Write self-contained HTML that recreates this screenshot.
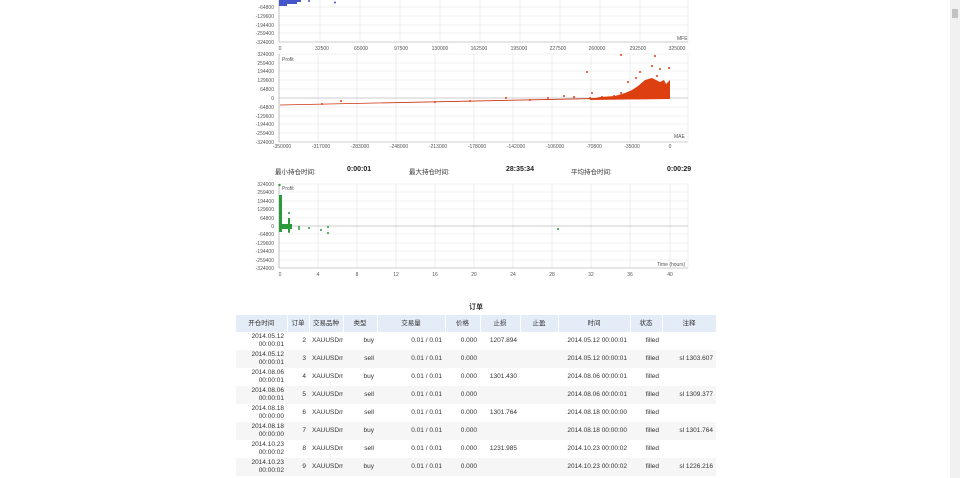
<!DOCTYPE html>
<html><head><meta charset="utf-8"><style>
body{margin:0;width:960px;height:478px;background:#fff;overflow:hidden;font-family:"Liberation Sans","Noto Sans CJK SC",sans-serif;position:relative}
.a{position:absolute}
svg text{font-family:"Liberation Sans",sans-serif;font-size:5px;fill:#555}
table{position:absolute;left:236px;top:315px;width:480px;table-layout:fixed;border-collapse:collapse;font-family:"Liberation Sans","Noto Sans CJK SC",sans-serif;font-size:6.5px;color:#333}
td,th{padding:0 3px;height:18px;line-height:8px;white-space:nowrap;overflow:hidden}
th{background:#e3ecf7;height:17px;font-weight:normal;border-right:1px solid #fff}
tr:nth-child(odd) td{background:#f6f6f6}
td.r{text-align:right}
.sb{position:absolute;left:950px;top:0;width:10px;height:478px;background:#f1f1f1}
.th{position:absolute;left:952px;top:9px;width:6px;height:9px;background:#c1c1c1}
</style></head><body>
<svg class="a" style="left:0;top:0" width="960" height="300">
<g stroke="#e2e2e2" stroke-width="0.6">
<line x1="279" y1="7" x2="688" y2="7"/><line x1="279" y1="16" x2="688" y2="16"/><line x1="279" y1="25" x2="688" y2="25"/><line x1="279" y1="33" x2="688" y2="33"/>
<line x1="320" y1="0" x2="320" y2="42"/><line x1="360" y1="0" x2="360" y2="42"/><line x1="400" y1="0" x2="400" y2="42"/><line x1="440" y1="0" x2="440" y2="42"/><line x1="480" y1="0" x2="480" y2="42"/><line x1="520" y1="0" x2="520" y2="42"/><line x1="560" y1="0" x2="560" y2="42"/><line x1="600" y1="0" x2="600" y2="42"/><line x1="640" y1="0" x2="640" y2="42"/><line x1="688" y1="0" x2="688" y2="42"/>
</g>
<line x1="279" y1="0" x2="279" y2="42" stroke="#999" stroke-width="0.6"/><line x1="279" y1="42" x2="688" y2="42" stroke="#999" stroke-width="0.6"/>
<path d="M279 0h22v2h-4v2h-10v2h-8z" fill="#4455cc"/><circle cx="309" cy="1" r="1" fill="#4455cc"/><circle cx="335" cy="2.5" r="1" fill="#4455cc"/>
<g text-anchor="end"><text x="274" y="9">-64800</text><text x="274" y="18">-129600</text><text x="274" y="27">-194400</text><text x="274" y="35">-259400</text><text x="274" y="44">-324000</text></g>
<text x="677" y="40">MFE</text>
<g text-anchor="middle"><text x="280" y="50">0</text><text x="322" y="50">32500</text><text x="361" y="50">65000</text><text x="401" y="50">97500</text><text x="440" y="50">130000</text><text x="479" y="50">162500</text><text x="519" y="50">195000</text><text x="558" y="50">227500</text><text x="597" y="50">260000</text><text x="638" y="50">292500</text><text x="677" y="50">325000</text></g>
<g stroke="#e2e2e2" stroke-width="0.6">
<line x1="279" y1="54" x2="688" y2="54"/><line x1="279" y1="63" x2="688" y2="63"/><line x1="279" y1="71" x2="688" y2="71"/><line x1="279" y1="80" x2="688" y2="80"/><line x1="279" y1="89" x2="688" y2="89"/><line x1="279" y1="107" x2="688" y2="107"/><line x1="279" y1="116" x2="688" y2="116"/><line x1="279" y1="124" x2="688" y2="124"/><line x1="279" y1="133" x2="688" y2="133"/>
<line x1="318" y1="54" x2="318" y2="142"/><line x1="357" y1="54" x2="357" y2="142"/><line x1="396" y1="54" x2="396" y2="142"/><line x1="435" y1="54" x2="435" y2="142"/><line x1="474" y1="54" x2="474" y2="142"/><line x1="513" y1="54" x2="513" y2="142"/><line x1="552" y1="54" x2="552" y2="142"/><line x1="591" y1="54" x2="591" y2="142"/><line x1="630" y1="54" x2="630" y2="142"/><line x1="688" y1="54" x2="688" y2="142"/>
</g>
<line x1="279" y1="98" x2="688" y2="98" stroke="#999" stroke-width="0.6"/><line x1="279" y1="54" x2="279" y2="142" stroke="#999" stroke-width="0.6"/><line x1="279" y1="142" x2="688" y2="142" stroke="#999" stroke-width="0.6"/>
<line x1="280" y1="105" x2="670" y2="97" stroke="#cc3311" stroke-width="0.8"/>
<path d="M590 99L600 97L615 96L625 93L632 90L638 86L645 80L652 78L660 82L664 80L666 84L670 80L670 99L590 100z" fill="#dd3f11"/>
<g fill="#dd3f11"><circle cx="322" cy="104" r="1"/><circle cx="341" cy="101" r="1"/><circle cx="435" cy="102" r="1"/><circle cx="470" cy="101" r="1"/><circle cx="506" cy="98" r="1"/><circle cx="530" cy="100" r="1"/><circle cx="548" cy="98" r="1"/><circle cx="564" cy="96" r="1"/><circle cx="590" cy="98" r="1"/><circle cx="602" cy="97" r="1"/><circle cx="621" cy="93" r="1"/><circle cx="628" cy="82" r="1"/><circle cx="621" cy="55" r="1"/><circle cx="655" cy="56" r="1"/><circle cx="640" cy="72" r="1"/><circle cx="592" cy="93" r="1"/><circle cx="587" cy="72" r="1"/><circle cx="660" cy="69" r="1"/><circle cx="669" cy="68" r="1"/><circle cx="645" cy="88" r="1"/><circle cx="614" cy="96" r="1"/><circle cx="574" cy="97" r="1"/><circle cx="652" cy="66" r="1"/><circle cx="657" cy="76" r="1"/><circle cx="636" cy="78" r="1"/></g>
<g text-anchor="end"><text x="274" y="56">324000</text><text x="274" y="65">259400</text><text x="274" y="73">194400</text><text x="274" y="82">129600</text><text x="274" y="91">64800</text><text x="274" y="100">0</text><text x="274" y="109">-64800</text><text x="274" y="118">-129600</text><text x="274" y="126">-194400</text><text x="274" y="135">-259400</text><text x="274" y="144">-324000</text></g>
<text x="282" y="61">Profit</text><text x="674" y="138">MAE</text>
<g text-anchor="middle"><text x="282" y="148">-350000</text><text x="321" y="148">-317000</text><text x="360" y="148">-283000</text><text x="399" y="148">-248000</text><text x="438" y="148">-213000</text><text x="477" y="148">-178000</text><text x="516" y="148">-142000</text><text x="555" y="148">-106000</text><text x="594" y="148">-70800</text><text x="632" y="148">-35000</text><text x="670" y="148">0</text></g>
<g stroke="#e2e2e2" stroke-width="0.6">
<line x1="279" y1="184" x2="688" y2="184"/><line x1="279" y1="192" x2="688" y2="192"/><line x1="279" y1="201" x2="688" y2="201"/><line x1="279" y1="209" x2="688" y2="209"/><line x1="279" y1="218" x2="688" y2="218"/><line x1="279" y1="234" x2="688" y2="234"/><line x1="279" y1="243" x2="688" y2="243"/><line x1="279" y1="251" x2="688" y2="251"/><line x1="279" y1="260" x2="688" y2="260"/>
<line x1="318" y1="184" x2="318" y2="268"/><line x1="357" y1="184" x2="357" y2="268"/><line x1="396" y1="184" x2="396" y2="268"/><line x1="435" y1="184" x2="435" y2="268"/><line x1="474" y1="184" x2="474" y2="268"/><line x1="513" y1="184" x2="513" y2="268"/><line x1="552" y1="184" x2="552" y2="268"/><line x1="591" y1="184" x2="591" y2="268"/><line x1="630" y1="184" x2="630" y2="268"/><line x1="670" y1="184" x2="670" y2="268"/><line x1="688" y1="184" x2="688" y2="268"/>
</g>
<line x1="279" y1="226" x2="688" y2="226" stroke="#999" stroke-width="0.6"/><line x1="279" y1="184" x2="279" y2="268" stroke="#999" stroke-width="0.6"/><line x1="279" y1="268" x2="688" y2="268" stroke="#999" stroke-width="0.6"/>
<path d="M279 195h3v37h-3z" fill="#2a9a3a"/><path d="M282 224h10v5h-10z" fill="#2a9a3a"/>
<g fill="#2a9a3a"><circle cx="279.5" cy="185" r="1.2"/><circle cx="289" cy="213" r="1"/><circle cx="289" cy="220" r="1"/><circle cx="289" cy="232" r="1"/><path d="M288 218h2v14h-2z"/><circle cx="299" cy="227" r="1"/><circle cx="299" cy="229" r="1"/><circle cx="309" cy="228" r="1"/><circle cx="321" cy="230" r="1"/><circle cx="328" cy="227" r="1"/><circle cx="328" cy="233" r="1"/><circle cx="558" cy="229" r="1"/></g>
<g text-anchor="end"><text x="274" y="186">324000</text><text x="274" y="194">259400</text><text x="274" y="203">194400</text><text x="274" y="211">129600</text><text x="274" y="220">64800</text><text x="274" y="228">0</text><text x="274" y="236">-64800</text><text x="274" y="245">-129600</text><text x="274" y="253">-194400</text><text x="274" y="262">-259400</text><text x="274" y="270">-324000</text></g>
<text x="282" y="190">Profit</text><text x="657" y="266">Time (hours)</text>
<g text-anchor="middle"><text x="280" y="276">0</text><text x="318" y="276">4</text><text x="357" y="276">8</text><text x="396" y="276">12</text><text x="435" y="276">16</text><text x="474" y="276">20</text><text x="513" y="276">24</text><text x="552" y="276">28</text><text x="591" y="276">32</text><text x="630" y="276">36</text><text x="670" y="276">40</text></g>
</svg>
<div class="a" style="top:166px;left:275px;font-size:6.5px;color:#333">最小持仓时间:</div>
<div class="a" style="top:166px;left:347px;font-size:7px;font-weight:bold;color:#222">0:00:01</div>
<div class="a" style="top:166px;left:409px;font-size:6.5px;color:#333">最大持仓时间:</div>
<div class="a" style="top:166px;left:506px;font-size:7px;font-weight:bold;color:#222">28:35:34</div>
<div class="a" style="top:166px;left:571px;font-size:6.5px;color:#333">平均持仓时间:</div>
<div class="a" style="top:166px;left:667px;font-size:7px;font-weight:bold;color:#222">0:00:29</div>
<div class="a" style="top:302px;left:469px;font-size:7px;font-weight:bold;color:#333">订单</div>
<table>
<colgroup><col style="width:51px"><col style="width:22px"><col style="width:34px"><col style="width:34px"><col style="width:68px"><col style="width:35px"><col style="width:40px"><col style="width:38px"><col style="width:72px"><col style="width:32px"><col style="width:54px"></colgroup>
<tr><th>开仓时间</th><th>订单</th><th>交易品种</th><th>类型</th><th>交易量</th><th>价格</th><th>止损</th><th>止盈</th><th>时间</th><th>状态</th><th>注释</th></tr>
<tr><td class="r">2014.05.12<br>00:00:01</td><td class="r">2</td><td>XAUUSDm</td><td class="r">buy</td><td class="r">0.01 / 0.01</td><td class="r">0.000</td><td class="r">1207.894</td><td></td><td class="r">2014.05.12 00:00:01</td><td class="r">filled</td><td class="r"></td></tr>
<tr><td class="r">2014.05.12<br>00:00:01</td><td class="r">3</td><td>XAUUSDm</td><td class="r">sell</td><td class="r">0.01 / 0.01</td><td class="r">0.000</td><td></td><td></td><td class="r">2014.05.12 00:00:01</td><td class="r">filled</td><td class="r">sl 1303.607</td></tr>
<tr><td class="r">2014.08.06<br>00:00:01</td><td class="r">4</td><td>XAUUSDm</td><td class="r">buy</td><td class="r">0.01 / 0.01</td><td class="r">0.000</td><td class="r">1301.430</td><td></td><td class="r">2014.08.06 00:00:01</td><td class="r">filled</td><td class="r"></td></tr>
<tr><td class="r">2014.08.06<br>00:00:01</td><td class="r">5</td><td>XAUUSDm</td><td class="r">sell</td><td class="r">0.01 / 0.01</td><td class="r">0.000</td><td></td><td></td><td class="r">2014.08.06 00:00:01</td><td class="r">filled</td><td class="r">sl 1309.377</td></tr>
<tr><td class="r">2014.08.18<br>00:00:00</td><td class="r">6</td><td>XAUUSDm</td><td class="r">sell</td><td class="r">0.01 / 0.01</td><td class="r">0.000</td><td class="r">1301.764</td><td></td><td class="r">2014.08.18 00:00:00</td><td class="r">filled</td><td class="r"></td></tr>
<tr><td class="r">2014.08.18<br>00:00:00</td><td class="r">7</td><td>XAUUSDm</td><td class="r">buy</td><td class="r">0.01 / 0.01</td><td class="r">0.000</td><td></td><td></td><td class="r">2014.08.18 00:00:00</td><td class="r">filled</td><td class="r">sl 1301.764</td></tr>
<tr><td class="r">2014.10.23<br>00:00:02</td><td class="r">8</td><td>XAUUSDm</td><td class="r">sell</td><td class="r">0.01 / 0.01</td><td class="r">0.000</td><td class="r">1231.985</td><td></td><td class="r">2014.10.23 00:00:02</td><td class="r">filled</td><td class="r"></td></tr>
<tr><td class="r">2014.10.23<br>00:00:02</td><td class="r">9</td><td>XAUUSDm</td><td class="r">buy</td><td class="r">0.01 / 0.01</td><td class="r">0.000</td><td></td><td></td><td class="r">2014.10.23 00:00:02</td><td class="r">filled</td><td class="r">sl 1226.216</td></tr>
</table>
<div class="sb"></div><div class="th"></div>
</body></html>
